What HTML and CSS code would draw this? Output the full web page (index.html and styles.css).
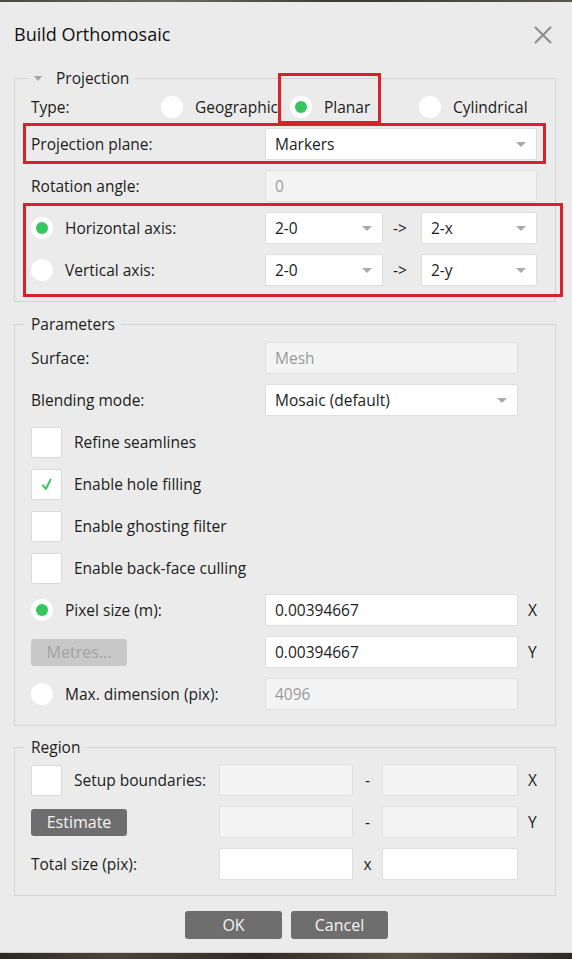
FILE: index.html
```html
<!DOCTYPE html>
<html>
<head>
<meta charset="utf-8">
<link rel="stylesheet" href="styles.css">
</head>
<body>
<div class="strip-top"></div>
<div class="dialog">
  <div class="titlebar">
    <span class="title">Build Orthomosaic</span>
    <svg class="close" width="20" height="20" viewBox="0 0 20 20"><path d="M2 2 L18 18 M18 2 L2 18" stroke="#8e8e8e" stroke-width="2.2" fill="none"/></svg>
  </div>

  <fieldset class="group g1">
    <legend class="legend legend-tri"><i class="tri"></i>Projection</legend>
    <div class="row type-row">
      <span class="type-lbl">Type:</span>
      <span class="opt"><i class="radio"></i><span>Geographic</span></span>
      <span class="opt mark-planar"><i class="radio on"></i><span>Planar</span></span>
      <span class="opt"><i class="radio"></i><span>Cylindrical</span></span>
    </div>
    <div class="row mark mark-plane">
      <span class="lbl">Projection plane:</span>
      <div class="combo w272"><span>Markers</span><i class="caret"></i></div>
    </div>
    <div class="row">
      <span class="lbl">Rotation angle:</span>
      <div class="combo w272 disabled"><span>0</span><i class="caret faint"></i></div>
    </div>
    <div class="axes mark">
      <div class="row">
        <span class="lbl"><i class="radio on"></i><span>Horizontal axis:</span></span>
        <div class="combo w118"><span>2-0</span><i class="caret"></i></div>
        <span class="arrow">-&gt;</span>
        <div class="combo w116"><span>2-x</span><i class="caret"></i></div>
      </div>
      <div class="row">
        <span class="lbl"><i class="radio"></i><span>Vertical axis:</span></span>
        <div class="combo w118"><span>2-0</span><i class="caret"></i></div>
        <span class="arrow">-&gt;</span>
        <div class="combo w116"><span>2-y</span><i class="caret"></i></div>
      </div>
    </div>
  </fieldset>

  <fieldset class="group g2">
    <legend class="legend">Parameters</legend>
    <div class="row">
      <span class="lbl">Surface:</span>
      <div class="combo w253 disabled"><span>Mesh</span><i class="caret faint"></i></div>
    </div>
    <div class="row">
      <span class="lbl">Blending mode:</span>
      <div class="combo w253"><span>Mosaic (default)</span><i class="caret"></i></div>
    </div>
    <div class="row"><span class="chk-lbl"><i class="check"></i><span>Refine seamlines</span></span></div>
    <div class="row"><span class="chk-lbl"><i class="check"><svg width="16" height="16" viewBox="0 0 16 16"><path d="M4 9.4 L6.8 13 L11.6 3.6" stroke="#39c462" stroke-width="2" fill="none" stroke-linecap="round" stroke-linejoin="round"/></svg></i><span>Enable hole filling</span></span></div>
    <div class="row"><span class="chk-lbl"><i class="check"></i><span>Enable ghosting filter</span></span></div>
    <div class="row"><span class="chk-lbl"><i class="check"></i><span>Enable back-face culling</span></span></div>
    <div class="row">
      <span class="lbl"><i class="radio on"></i><span>Pixel size (m):</span></span>
      <div class="field w253">0.00394667</div>
      <span class="axis-l">X</span>
    </div>
    <div class="row">
      <span class="lbl"><span class="btn btn-off">Metres...</span></span>
      <div class="field w253">0.00394667</div>
      <span class="axis-l">Y</span>
    </div>
    <div class="row">
      <span class="lbl"><i class="radio"></i><span>Max. dimension (pix):</span></span>
      <div class="field w253 disabled">4096</div>
    </div>
  </fieldset>

  <fieldset class="group g3">
    <legend class="legend">Region</legend>
    <div class="row">
      <span class="lbl-r"><i class="check"></i><span>Setup boundaries:</span></span>
      <div class="field w134 disabled"></div>
      <span class="dash">-</span>
      <div class="field w136 disabled"></div>
      <span class="axis-l">X</span>
    </div>
    <div class="row">
      <span class="lbl-r"><span class="btn btn-dark">Estimate</span></span>
      <div class="field w134 disabled"></div>
      <span class="dash">-</span>
      <div class="field w136 disabled"></div>
      <span class="axis-l">Y</span>
    </div>
    <div class="row">
      <span class="lbl-r">Total size (pix):</span>
      <div class="field w134"></div>
      <span class="dash">x</span>
      <div class="field w136"></div>
    </div>
  </fieldset>

  <div class="buttons">
    <span class="btn btn-dark btn-main">OK</span>
    <span class="btn btn-dark btn-main">Cancel</span>
  </div>
</div>
<div class="strip-bottom"></div>
</body>
</html>
```

FILE: styles.css
```css
html, body {
  margin: 0;
  padding: 0;
}
body {
  width: 572px;
  height: 959px;
  overflow: hidden;
  background: #ebebeb;
  font-family: "Open Sans", "Noto Sans", sans-serif;
  font-size: 15.5px;
  color: #1c1c1c;
  display: flex;
  flex-direction: column;
}
.strip-top {
  height: 2px;
  background: linear-gradient(90deg, #4a4a40, #6b6a5e 30%, #3b3a33 60%, #5a584c);
  flex: none;
}
.strip-bottom {
  height: 6px;
  flex: none;
  background: linear-gradient(90deg, #2b2822, #4a453a 20%, #2e2a22 45%, #5a5345 70%, #2d2a24);
  border-top: 1px solid #cfcfcf;
}
.dialog {
  flex: 1;
  display: flex;
  flex-direction: column;
}
.titlebar {
  height: 66px;
  box-sizing: border-box;
  padding: 20px 19px 0 14px;
  display: flex;
  justify-content: space-between;
  align-items: flex-start;
  flex: none;
}
.title {
  font-size: 18px;
  line-height: 24px;
  color: #111;
}
.close {
  margin-top: 3px;
}

.group {
  margin: 0 16px 0 14px;
  border: 1px solid #d4d4d4;
  padding: 8px 17px 15px 16px;
  display: flex;
  flex-direction: column;
  gap: 10px;
  min-width: 0;
}
.g2 { margin-top: 12px; }
.g3 { margin-top: 11px; }
.g3 { padding-top: 7px; }
.legend {
  line-height: 20px;
  padding: 0 6px 0 7px;
  margin-left: -7px;
  color: #1c1c1c;
}
.tri {
  display: inline-block;
  width: 0;
  height: 0;
  border-left: 4px solid transparent;
  border-right: 4px solid transparent;
  border-top: 5px solid #a3a3a3;
  margin: 0 14px 3px 0;
  vertical-align: middle;
}
.legend-tri {
  padding-left: 6px;
  margin-left: -3px;
}

.row {
  display: flex;
  align-items: center;
  height: 32px;
  flex: none;
}
.type-row {
  height: 22px;
}
.type-lbl {
  width: 130px;
  flex: none;
}
.opt {
  width: 129px;
  flex: none;
  display: flex;
  align-items: center;
  gap: 12px;
  white-space: nowrap;
}
.lbl {
  width: 234px;
  flex: none;
  display: flex;
  align-items: center;
  gap: 12px;
  white-space: nowrap;
}
.lbl-r {
  width: 188px;
  flex: none;
  display: flex;
  align-items: center;
  gap: 12px;
  white-space: nowrap;
}
.chk-lbl {
  display: flex;
  align-items: center;
  gap: 12px;
}

.radio {
  width: 22px;
  height: 22px;
  border-radius: 50%;
  background: #fff;
  flex: none;
  display: flex;
  align-items: center;
  justify-content: center;
}
.radio.on::after {
  content: "";
  width: 12px;
  height: 12px;
  border-radius: 50%;
  background: #35c75d;
}
.check {
  width: 31px;
  height: 31px;
  box-sizing: border-box;
  background: #fff;
  border: 1px solid #dadada;
  border-radius: 2px;
  flex: none;
  display: flex;
  align-items: center;
  justify-content: center;
}

.combo, .field {
  height: 32px;
  box-sizing: border-box;
  background: #fff;
  border: 1px solid #dddddd;
  border-radius: 2px;
  display: flex;
  align-items: center;
  padding: 0 10px 0 9px;
  flex: none;
}
.combo {
  justify-content: space-between;
}
.disabled {
  background: #f4f4f4;
  border-color: #e0e0e0;
  color: #9a9a9a;
}
.caret {
  width: 0;
  height: 0;
  border-left: 5px solid transparent;
  border-right: 5px solid transparent;
  border-top: 5px solid #a9a9a9;
}
.caret.faint {
  border-top-color: #f4f4f4;
}
.w272 { width: 272px; }
.w253 { width: 253px; }
.w118 { width: 118px; }
.w116 { width: 116px; }
.w134 { width: 134px; }
.w136 { width: 136px; }
.arrow {
  width: 38px;
  box-sizing: border-box;
  padding-left: 10px;
  flex: none;
}
.dash {
  width: 29px;
  text-align: center;
  flex: none;
}
.axis-l {
  margin-left: 10px;
}

.btn {
  width: 96px;
  height: 27px;
  box-sizing: border-box;
  border-radius: 3px;
  display: inline-flex;
  align-items: center;
  justify-content: center;
  font-size: 16px;
}
.btn-off {
  background: #c8c8c8;
  color: #a2a2a2;
}
.btn-dark {
  background: #6e6e6e;
  color: #f4f4f4;
}
.buttons {
  display: flex;
  justify-content: center;
  gap: 9px;
  margin-top: 15px;
  padding-left: 1px;
}
.btn-main {
  width: 97px;
  height: 28px;
}

.mark {
  position: relative;
}
.mark::after {
  content: "";
  position: absolute;
  border: 3px solid #d8222b;
  pointer-events: none;
}
.mark-plane::after {
  left: -8px;
  right: -8px;
  top: -5px;
  bottom: -4px;
}
.axes {
  display: flex;
  flex-direction: column;
  gap: 10px;
}
.axes.mark::after {
  left: -8px;
  right: -25px;
  top: -9px;
  bottom: -11px;
}
.mark-planar {
  position: relative;
}
.mark-planar::after {
  content: "";
  position: absolute;
  left: -12px;
  top: -23px;
  width: 103px;
  height: 51px;
  box-sizing: border-box;
  border: 3px solid #d8222b;
}
```
